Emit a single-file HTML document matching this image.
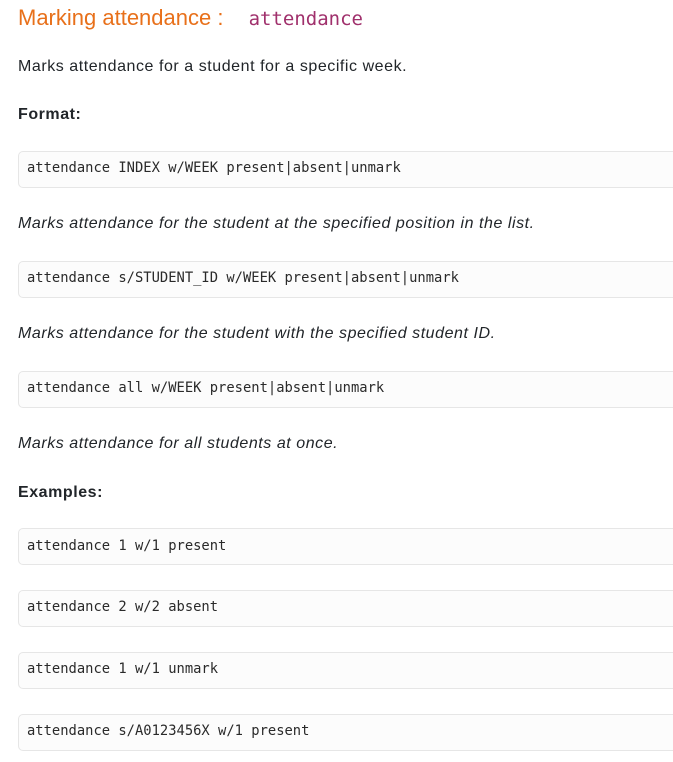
<!DOCTYPE html>
<html><head><style>
body{margin:0;width:673px;height:762px;overflow:hidden;background:#fff;font-family:"Liberation Sans",sans-serif;color:#212529;position:relative}
.a{position:absolute;left:18px;white-space:nowrap}
h1{margin:0;font-weight:normal;font-size:22px;color:#e8701a;top:4px;line-height:28px}
h1 code{font-family:"DejaVu Sans Mono","Liberation Mono",monospace;font-size:19px;color:#a0306c;margin-left:19px}
.p{font-size:16px;line-height:20px;letter-spacing:0.55px}
.i{font-style:italic}
.b{font-weight:bold}
.c{position:absolute;left:18px;width:680px;height:35px;border:1px solid #e6e6e6;border-radius:5px;background:#fcfcfc;box-sizing:border-box}
.c span{position:absolute;left:8px;top:8px;font-family:"DejaVu Sans Mono","Liberation Mono",monospace;font-size:13.8px;color:#2a2a2a;white-space:nowrap;line-height:17px}
</style></head><body>
<h1 class="a">Marking attendance : <code>attendance</code></h1>
<div class="a p" style="top:57px">Marks attendance for a student for a specific week.</div>
<div class="a p b" style="top:105px">Format:</div>
<div class="c" style="top:151px;height:37px"><span style="top:8px">attendance INDEX w/WEEK present|absent|unmark</span></div>
<div class="a p i" style="top:214px">Marks attendance for the student at the specified position in the list.</div>
<div class="c" style="top:261px;height:37px"><span style="top:8px">attendance s/STUDENT_ID w/WEEK present|absent|unmark</span></div>
<div class="a p i" style="top:324px">Marks attendance for the student with the specified student ID.</div>
<div class="c" style="top:371px;height:37px"><span style="top:8px">attendance all w/WEEK present|absent|unmark</span></div>
<div class="a p i" style="top:434px">Marks attendance for all students at once.</div>
<div class="a p b" style="top:483px">Examples:</div>
<div class="c" style="top:528px;height:37px"><span style="top:9px">attendance 1 w/1 present</span></div>
<div class="c" style="top:590px;height:37px"><span style="top:8px">attendance 2 w/2 absent</span></div>
<div class="c" style="top:652px;height:37px"><span style="top:8px">attendance 1 w/1 unmark</span></div>
<div class="c" style="top:714px;height:37px"><span style="top:8px">attendance s/A0123456X w/1 present</span></div>
</body></html>
